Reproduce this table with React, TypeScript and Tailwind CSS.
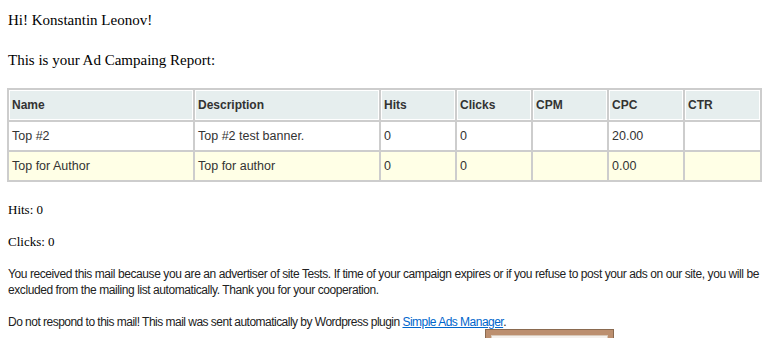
const rows = [
  { name: 'Top #2', desc: 'Top #2 test banner.', hits: '0', clicks: '0', cpm: '', cpc: '20.00', ctr: '', alt: false },
  { name: 'Top for Author', desc: 'Top for author', hits: '0', clicks: '0', cpm: '', cpc: '0.00', ctr: '', alt: true },
]

const heads = ['Name', 'Description', 'Hits', 'Clicks', 'CPM', 'CPC', 'CTR']
const widths = ['w-[184px]', 'w-[184px]', 'w-[74px]', 'w-[74px]', 'w-[74px]', 'w-[74px]', 'w-[75px]']

const sans = { fontFamily: '"Liberation Sans", Arial, sans-serif' }

export default function App() {
  return (
    <div
      className="bg-white w-[767px] h-[338px] overflow-hidden relative px-2 text-black"
      style={{ fontFamily: '"Liberation Serif", "Times New Roman", serif' }}
    >
      <p className="pt-[11px] text-[15px] leading-[18px]">Hi! Konstantin Leonov!</p>
      <p className="mt-[22px] text-[15px] leading-[18px]">This is your Ad Campaing Report:</p>

      <table
        className="mt-[19px] -ml-px w-[755px] table-fixed border-separate border-spacing-[2px] bg-[#cdcdcd] text-[12.5px] text-[#333]"
        style={sans}
      >
        <thead>
          <tr>
            {heads.map((h, i) => (
              <th
                key={h}
                className={`${widths[i]} h-[30px] bg-[#e6eeee] border border-white text-left font-bold text-[12px] pl-[2px] p-0`}
              >
                {h}
              </th>
            ))}
          </tr>
        </thead>
        <tbody>
          {rows.map((r) => {
            const cells = [r.name, r.desc, r.hits, r.clicks, r.cpm, r.cpc, r.ctr]
            return (
              <tr key={r.name}>
                {cells.map((c, i) => (
                  <td
                    key={i}
                    className={`${r.alt ? 'bg-[#ffffe6]' : 'bg-white'} h-[28px] p-0 pl-[3px]`}
                  >
                    {c}
                  </td>
                ))}
              </tr>
            )
          })}
        </tbody>
      </table>

      <p className="mt-[20px] text-[13px] leading-[15px]">Hits: 0</p>
      <p className="mt-[17px] text-[13px] leading-[15px]">Clicks: 0</p>
      <p className="mt-[17px] text-[12px] leading-[16px] text-[#222] w-[757px] tracking-[-0.42px]" style={sans}>
        You received this mail because you are an advertiser of site Tests. If time of your campaign expires or if you refuse to post your ads on our site, you will be excluded from the mailing list automatically. Thank you for your cooperation.
      </p>
      <p className="mt-[16px] text-[12px] leading-[16px] text-[#222] tracking-[-0.52px]" style={sans}>
        Do not respond to this mail! This mail was sent automatically by Wordpress plugin{' '}
        <a href="#" className="text-[#0066cc] underline">Simple Ads Manager</a>.
      </p>

      <div className="absolute left-[485px] top-[329px] w-[129px] h-[20px] bg-[#bc8f6f] border border-[#8a6a50] p-[5px]">
        <div className="h-full bg-[#f4f0ec] border border-[#d8c8b8]" />
      </div>
    </div>
  )
}
